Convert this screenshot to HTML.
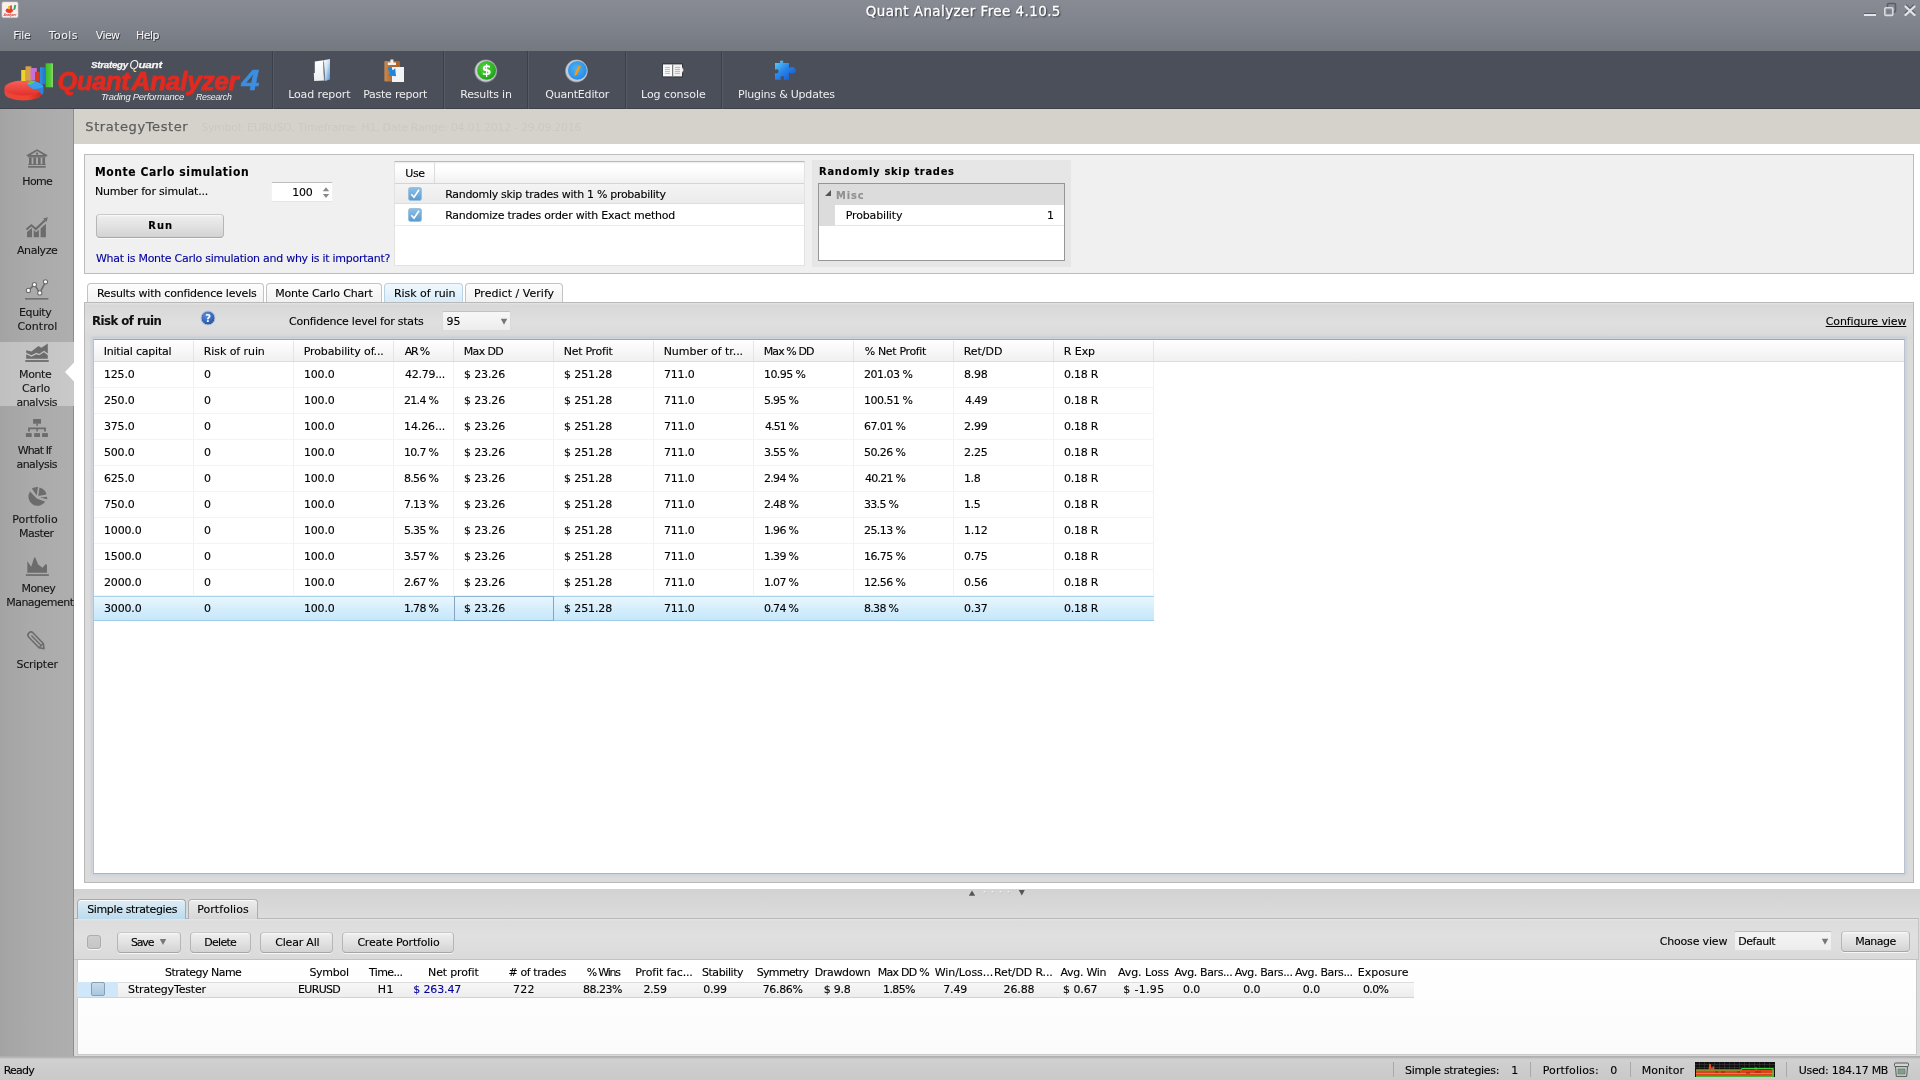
<!DOCTYPE html>
<html lang="en">
<head>
<meta charset="utf-8">
<title>Quant Analyzer Free 4.10.5</title>
<style>
*{box-sizing:border-box;margin:0;padding:0}
html,body{width:1920px;height:1080px;overflow:hidden;background:#fff}
#app{position:absolute;left:0;top:0;width:1920px;height:1080px;overflow:hidden;transform:translateZ(0);will-change:transform}
body{position:relative;font-family:"DejaVu Sans","Liberation Sans",sans-serif;font-size:11px;letter-spacing:-0.25px;color:#000;-webkit-text-stroke:.12px currentColor;line-height:14px}
.a{position:absolute;white-space:nowrap}
.b{font-weight:bold}
.cd{font-family:"DejaVu Sans Condensed","DejaVu Sans","Liberation Sans",sans-serif}
/* top chrome */
#titlebar{left:0;top:0;width:1920px;height:51px;background:linear-gradient(#888b94 0,#80848d 45%,#74787f 100%)}
.title{color:#fff;-webkit-text-stroke:.3px #fff;text-shadow:1px 1px 1.5px rgba(30,30,40,.9)}
.menu{color:#f6f6f6;-webkit-text-stroke:0;text-shadow:1px 1px 0 rgba(30,30,40,.75)}
#toolbar{left:0;top:51px;width:1920px;height:58px;background:#4b4f59;border-bottom:1px solid #3d4048}
.tsep{top:51px;width:2px;height:58px;border-left:1px solid #3b3f47;border-right:1px solid #565a64}
.tlabel{color:#eeeeee;-webkit-text-stroke:0}
/* sidebar */
#sidebar{left:0;top:109px;width:74px;height:949px;background:linear-gradient(90deg,#a3a3a3 0,#aaaaaa 30px,#aeaeae 72px,#aeaeae 72.5px,#8e8e8e 73px,#8e8e8e 74px)}
#sidesel{left:0;top:342px;width:74px;height:64px;background:linear-gradient(90deg,#c0c0c0,#c9c9c9)}
.slabel{color:#161616}
.vsep{width:1px;background:#f2f2f2}
.hsep{height:1px;background:#f3f3f3}
/* header band */
#band{left:74px;top:109px;width:1846px;height:35px;background:#d5d2cb}
/* panels */
#mcpanel{left:84px;top:154px;width:1830px;height:120px;background:#f0f0f0;border:1px solid #bcbcbc}
#rrpanel{left:84px;top:302px;width:1830px;height:581px;background:#dbdbdb;border:1px solid #b9b9b9}
#rrhead{left:85px;top:303px;width:1828px;height:36px;background:linear-gradient(#e4e4e4 0,#d8d8d8 2px,#dfdfdf 55%,#d9d9d9)}
#rrtable{left:93px;top:339px;width:1812px;height:535px;background:#fff;border:1px solid #a9b6c6;border-top-color:#9ca8b6;border-left-color:#b7c2ce;border-right-color:#b7c2ce;box-shadow:0 0 0 1px #ccd5df,0 -1px 2px 1px rgba(186,199,214,.75),0 0 3px 1px rgba(190,202,216,.6)}
.tab{top:283px;height:20px;border:1px solid #c3c3c3;border-bottom:none;border-radius:4px 4px 0 0;background:linear-gradient(#fdfdfd,#f1f1f1);text-align:center;line-height:17px}
.tab.sel{background:linear-gradient(#f1f8fd,#d6ebf9);border-color:#b9d2e4}
.btn{border:1px solid #b6b6b6;border-top-color:#c9c9c9;border-bottom-color:#a6a6a6;border-radius:4px;background:linear-gradient(#fbfbfb 0,#ececec 2px,#e2e2e2 50%,#d3d3d3);text-align:center;box-shadow:0 1px 0 rgba(255,255,255,.75)}
.th{top:340px;height:21px;line-height:21px;padding-left:10px;border-right:1px solid #e3e3e3;background:linear-gradient(#fff,#f1f1f1);overflow:hidden}
.td{height:26px;line-height:25px;padding-left:10px;border-right:1px solid #efefef;border-bottom:1px solid #efefef;overflow:hidden}
.selrow .td{background:linear-gradient(#e4f3fd,#c5e4f8);border-right-color:transparent;border-bottom:1px solid #9fcbe6;border-top:1px solid #a6d0ea;line-height:23px}
#thead{left:94px;top:340px;width:1810px;height:22px;background:linear-gradient(#ffffff,#f0f0f0);border-bottom:1px solid #dcdcdc}
/* bottom */
#bottom{left:74px;top:889px;width:1846px;height:169px;background:linear-gradient(#d2d2d2 0,#dcdcdc 30px,#dadada 100%)}
#btoolbar{left:74px;top:918px;width:1845px;height:42px;background:linear-gradient(#e6e6e6 0,#dcdcdc 2px,#e0e0e0 45%,#dadada);border-top:1px solid #b9b9b9;border-bottom:1px solid #c2c2c2;border-right:1px solid #c4c4c4}
#btable{left:77px;top:960px;width:1840px;height:95px;background:linear-gradient(#fff,#fbfbfb);border:1px solid #c9c9c9;border-top:none}
#status{left:0;top:1056px;width:1920px;height:24px;background:linear-gradient(#b4b4b4 0,#a9a9a9 1px,#c4c4c4 2px,#d1d1d1 4px,#cdcdcd 12px,#c9c9c9 24px)}
.ssep{top:1062px;width:1px;height:15px;background:#a9a9a9}
.bh{top:965px;text-align:center}
.bd{top:982px;text-align:center}
.link{color:#0000a0}
</style>
</head>
<body>
<div id="app">
<div id="titlebar" class="a"></div>
<svg class="a" style="left:1px;top:1px" width="18" height="18" viewBox="0 0 18 18">
<rect x="1" y="1" width="16" height="15.6" rx="1.5" fill="#f6f0ee" stroke="#d8d4d6" stroke-width=".6"/>
<ellipse cx="8.3" cy="9.6" rx="3.6" ry="2.4" fill="#ee3a2c"/>
<rect x="7" y="5" width="2" height="3.2" fill="#f0c030"/>
<rect x="9" y="4.4" width="2" height="3.6" fill="#d05a48"/>
<path d="M12.3 8.8 L13.4 3.8 L15.2 4.2 L14.4 8.2 Q13.2 9.4 11.4 9.2Z" fill="#3aa860"/>
<text x="2.6" y="14.6" font-family="Liberation Sans, sans-serif" font-size="3.4" font-weight="bold" font-style="italic" fill="#d83c34" textLength="12.5" lengthAdjust="spacingAndGlyphs">Analyzer</text>
</svg>
<div class="a title" style="left:865.7px;top:4px;letter-spacing:0.41px;font-size:13.5px;">Quant Analyzer Free 4.10.5</div>
<svg class="a" style="left:1860px;top:0" width="60" height="22" viewBox="1860 0 60 22">
<rect x="1864" y="13" width="12" height="1" fill="#5a5d66"/>
<rect x="1864" y="14" width="12" height="2" fill="#e4e5e8"/>
<rect x="1887.5" y="3.5" width="8" height="8.5" rx="1" fill="none" stroke="#5b5e67" stroke-width="1.6"/>
<rect x="1884.8" y="7.8" width="8" height="7.6" rx="1.2" fill="#878a93" stroke="#d9dadd" stroke-width="1.6"/>
<rect x="1887" y="10" width="3.6" height="3.4" fill="#7a7d85"/>
<path d="M1905.5 6.5 L1914.5 15 M1914.5 6.5 L1905.5 15" stroke="#5d6069" stroke-width="3" fill="none" transform="translate(0,-1.2)"/>
<path d="M1905.5 6.5 L1914.5 15 M1914.5 6.5 L1905.5 15" stroke="#e3e4e7" stroke-width="2.4" fill="none" stroke-linecap="round"/>
</svg>
<div class="a menu" style="left:13.2px;top:29px;letter-spacing:-0.27px;">File</div>
<div class="a menu" style="left:48.7px;top:29px;letter-spacing:0.45px;">Tools</div>
<div class="a menu" style="left:95.7px;top:29px;letter-spacing:-0.57px;">View</div>
<div class="a menu" style="left:135.9px;top:29px;letter-spacing:-0.47px;">Help</div>
<div id="toolbar" class="a"></div>
<div class="a tsep" style="left:272px"></div>
<div class="a tsep" style="left:443px"></div>
<div class="a tsep" style="left:527px"></div>
<div class="a tsep" style="left:625px"></div>
<div class="a tsep" style="left:721px"></div>
<svg class="a" style="left:0;top:51px" width="272" height="58" viewBox="0 51 272 58">
<defs>
<linearGradient id="lgR" x1="0" y1="0" x2="0" y2="1"><stop offset="0" stop-color="#f8605a"/><stop offset="1" stop-color="#e2302a"/></linearGradient>
<linearGradient id="lgRs" x1="0" y1="0" x2="1" y2="0"><stop offset="0" stop-color="#e8463c"/><stop offset=".6" stop-color="#f0442e"/><stop offset="1" stop-color="#c8281e"/></linearGradient>
<linearGradient id="lgG" x1="0" y1="0" x2="1" y2="0"><stop offset="0" stop-color="#3fb82c"/><stop offset=".75" stop-color="#58d23c"/><stop offset="1" stop-color="#9be87c"/></linearGradient>
<linearGradient id="lgB" x1="0" y1="0" x2="1" y2="0"><stop offset="0" stop-color="#2f8fe6"/><stop offset="1" stop-color="#1f74c8"/></linearGradient>
</defs>
<!-- pie base -->
<path d="M4.5 88 v5 a19 7.5 0 0 0 38 0 v-5z" fill="url(#lgRs)"/>
<ellipse cx="23.5" cy="88" rx="19" ry="7.5" fill="url(#lgR)"/>
<!-- blue slice -->
<path d="M26 85 L42 84 L43.5 88 v4 a19 7.5 0 0 1 -1.5 3 L38 90Z" fill="#2a84d8"/>
<path d="M26.5 84.5 L35 81 Q42 83 43.5 87 Q38 89.5 33 89Z" fill="#3aa0ee"/>
<path d="M27 84 L31 80.5 L36 81 L31 84.5Z" fill="#5fd04a"/>
<!-- bars -->
<rect x="21.2" y="70" width="4.6" height="11" fill="#f2d22a"/>
<rect x="25.5" y="66.3" width="5.8" height="14.5" fill="#d9a04a"/>
<rect x="30.6" y="68" width="6.2" height="12.5" fill="#c272d8"/>
<rect x="35" y="71.8" width="4.8" height="9.8" fill="#d8381e"/>
<rect x="40" y="67.3" width="5.6" height="17" fill="url(#lgB)"/>
<rect x="45.6" y="63.3" width="7.3" height="24" fill="url(#lgG)"/>
<!-- text -->
<g font-family="Liberation Sans, DejaVu Sans, sans-serif" font-style="italic">
<text x="91" y="68.3" font-size="9.6" font-weight="bold" fill="#f4f4f4" stroke="#f4f4f4" stroke-width=".25" textLength="37" lengthAdjust="spacingAndGlyphs">Strategy</text>
<text x="129.5" y="69.3" font-size="13" font-weight="normal" fill="#fafafa" textLength="9" lengthAdjust="spacingAndGlyphs">Q</text>
<path d="M133 67.5 l2.2 4.2" stroke="#e09a3a" stroke-width="1" fill="none"/>
<text x="138.5" y="68.3" font-size="9.6" font-weight="bold" fill="#f4f4f4" stroke="#f4f4f4" stroke-width=".25" textLength="23.5" lengthAdjust="spacingAndGlyphs">uant</text>
<text x="57.5" y="90" font-size="25" font-weight="bold" fill="#e12a20" stroke="#e12a20" stroke-width=".9" stroke-linejoin="round" textLength="72" lengthAdjust="spacingAndGlyphs">Quant</text>
<text x="131.5" y="90" font-size="25" font-weight="bold" fill="#e12a20" stroke="#e12a20" stroke-width=".9" stroke-linejoin="round" textLength="107" lengthAdjust="spacingAndGlyphs">Analyzer</text>
<text x="241.5" y="90" font-size="29" font-weight="bold" fill="#3c8ee2" stroke="#3c8ee2" stroke-width=".6" textLength="17.5" lengthAdjust="spacingAndGlyphs">4</text>
<text x="101" y="100" font-size="9.6" fill="#eeeeee" textLength="83" lengthAdjust="spacingAndGlyphs">Trading Performance</text>
<text x="196" y="100" font-size="9.6" fill="#eeeeee" textLength="35.5" lengthAdjust="spacingAndGlyphs">Research</text>
</g>
</svg>
<div class="a tlabel" style="left:288.2px;top:88px;letter-spacing:-0.12px;">Load report</div>
<div class="a tlabel" style="left:363.2px;top:88px;letter-spacing:-0.25px;">Paste report</div>
<div class="a tlabel" style="left:460.2px;top:88px;letter-spacing:-0.16px;">Results in</div>
<div class="a tlabel" style="left:545.2px;top:88px;letter-spacing:-0.20px;">QuantEditor</div>
<div class="a tlabel" style="left:641.0px;top:88px;letter-spacing:-0.05px;">Log console</div>
<div class="a tlabel" style="left:738.0px;top:88px;letter-spacing:-0.22px;">Plugins &amp; Updates</div>
<svg class="a" style="left:300px;top:55px" width="520" height="32" viewBox="300 55 520 32">
<defs>
<linearGradient id="fb" x1="0" y1="0" x2="1" y2="1"><stop offset="0" stop-color="#ffffff"/><stop offset=".45" stop-color="#cfe2f4"/><stop offset="1" stop-color="#4f90cf"/></linearGradient>
<linearGradient id="fw" x1="0" y1="0" x2="0" y2="1"><stop offset="0" stop-color="#ffffff"/><stop offset="1" stop-color="#eceef0"/></linearGradient>
<radialGradient id="gg" cx=".4" cy=".35" r=".75"><stop offset="0" stop-color="#52d23e"/><stop offset=".7" stop-color="#2cae22"/><stop offset="1" stop-color="#128a10"/></radialGradient>
<radialGradient id="bg2" cx=".45" cy=".4" r=".75"><stop offset="0" stop-color="#4cb2f4"/><stop offset=".7" stop-color="#2a92ea"/><stop offset="1" stop-color="#1c7cd8"/></radialGradient>
<linearGradient id="pz" x1="0" y1="0" x2="1" y2="1"><stop offset="0" stop-color="#62d0f4"/><stop offset=".45" stop-color="#2a86ea"/><stop offset="1" stop-color="#1450c8"/></linearGradient>
<linearGradient id="cb" x1="0" y1="0" x2="1" y2="0"><stop offset="0" stop-color="#c98a52"/><stop offset=".5" stop-color="#b06a30"/><stop offset="1" stop-color="#a8642c"/></linearGradient>
</defs>
<!-- folder / load report -->
<path d="M323.6 60.2 L330 59 L330 79.6 L325.2 81 Z" fill="url(#fb)"/>
<path d="M314.8 61.4 L323.4 60.3 L323.8 74 L324.6 80.6 L314.2 81 L313.8 73 L314.8 73 Z" fill="url(#fw)"/>
<path d="M323.6 62 L324.4 80.6" stroke="#6f7f94" stroke-width=".9" fill="none"/>
<!-- paste -->
<rect x="384.4" y="61" width="15.6" height="20.4" rx="1" fill="url(#cb)"/>
<path d="M387.8 65 v-2.6 h2.6 v-3 h3 v3 h2.6 v2.6z" fill="#f4f0ea"/>
<rect x="392" y="67" width="12" height="15" fill="#f2f3f5"/>
<path d="M387.6 68 l2 -1.4 l3.4 3.6 l2.2 -2 l0.8 8 l-8 -0.6 l2.2 -2.2z" fill="#1f86e0"/>
<!-- results in -->
<circle cx="485.8" cy="71" r="11.4" fill="#8d9095"/>
<circle cx="485.8" cy="70.8" r="10.6" fill="#c9ccd0"/>
<circle cx="486.6" cy="70.4" r="9.4" fill="url(#gg)"/>
<text x="486.6" y="75.4" text-anchor="middle" font-family="DejaVu Sans, sans-serif" font-weight="bold" font-size="14" fill="#fff">$</text>
<!-- quanteditor -->
<circle cx="576.4" cy="71" r="11.4" fill="#8a8d92"/>
<circle cx="576.6" cy="70.8" r="10.8" fill="#c4cbd6"/>
<circle cx="577.4" cy="70.4" r="9.4" fill="url(#bg2)"/>
<path d="M578.6 65.6 l2.4 .6 l-4 8.6 l-2.6 1.2 l.2 -2.6z" fill="#f09a1e"/>
<!-- log console -->
<rect x="662.4" y="63.4" width="20.4" height="14" fill="#2c2f36"/>
<rect x="663" y="64.4" width="9.6" height="12" fill="#fafafa"/>
<rect x="672.6" y="64.4" width="9.4" height="12" fill="#f2f2f2"/>
<path d="M672.6 64.4 v12" stroke="#7a7a7a" stroke-width="1.2"/>
<path d="M665 67.4 h5 M665 69.4 h5 M665 71.4 h5 M665 73.4 h5 M675 67.4 h5 M675 69.4 h5 M675 71.4 h5 M675 73.4 h5" stroke="#a9a9a9" stroke-width=".8"/>
<path d="M682 67 l1.6 3 l-1.6 3z" fill="#e8e8e8"/>
<!-- plugins -->
<path d="M775 63 h5.4 q-1.6 -2.2 1.2 -2.4 q2.8 .2 1.2 2.4 h6.2 v5.2 q3 -2 5 -.4 q2.6 1.4 1.6 4 q-1.4 2.6 -4.6 1.4 l-2 -.8 v7.4 h-5 v-3.6 h-3.2 v3.600 h-5.800 v-6.600 q3.400 1.200 3.600 -1.800 q-.2 -3 -3.600 -1.600 z" fill="url(#pz)"/>
</svg>
<div id="sidebar" class="a"></div>
<div id="sidesel" class="a"></div>
<svg class="a" style="left:64px;top:362px" width="10" height="20" viewBox="0 0 10 20"><path d="M10 0.500 L1 10 L10 19.500Z" fill="#fff"/></svg>
<svg class="a" style="left:20px;top:145px" width="34" height="510" viewBox="20 145 34 510" fill="#6c6c6c">
<!-- home -->
<path d="M37 149.300 L47.300 155 L47.300 156.200 L26.700 156.200 L26.700 155 Z M37 151 L30.600 154.900 L43.400 154.900 Z" fill-rule="evenodd"/>
<circle cx="37" cy="153.700" r="1.150"/>
<rect x="28.100" y="156.200" width="17.600" height="1.300"/>
<path d="M29 157.500 h2.600 v6.600 h.8 v1 h-4.200 v-1 h.8z M33.400 157.500 h2.600 v6.600 h.8 v1 h-4.200 v-1 h.8z M38 157.500 h2.600 v6.600 h.8 v1 h-4.200 v-1 h.8z M42.400 157.500 h2.600 v6.600 h.8 v1 h-4.200 v-1 h.8z"/>
<rect x="28.100" y="166" width="17.600" height="1.700"/>
<!-- analyze -->
<path d="M26.400 229.500 L31.400 225.300 L35.900 229.100 L45 220.300" fill="none" stroke="#6c6c6c" stroke-width="2.100"/>
<path d="M43.200 218.500 L47.900 217.300 L46.500 222 Z"/>
<path d="M27 232 L32 228 L32 237.300 L27 237.300Z M33.700 230 L36.100 232.200 L38.900 229.800 L38.900 237.300 L33.700 237.300Z M40.600 228.600 L45.900 223.700 L45.900 237.300 L40.600 237.300Z"/>
<!-- equity control -->
<path d="M28.400 290.400 L34.400 284.600 L39.800 292.900 L45.500 281.800" fill="none" stroke="#6c6c6c" stroke-width="1.500"/>
<g fill="#fff" stroke="#6c6c6c" stroke-width="1.100"><circle cx="28.400" cy="290.400" r="2.100"/><circle cx="34.400" cy="284.600" r="2.100"/><circle cx="39.800" cy="292.900" r="2.100"/><circle cx="45.500" cy="281.800" r="2.100"/></g>
<rect x="25" y="298.100" width="23.400" height="1.500"/>
<!-- monte carlo -->
<path d="M26.200 350.200 L31.400 351.600 L38.400 346 L41.400 347.700 L47.800 343.600 L47.800 353.600 L44 350.800 L39.200 353.900 L36.400 352.800 L31.400 355.300 L26.200 352.800Z"/>
<path d="M26.200 354.200 L31.400 356.800 L36.400 354.200 L39.200 355.300 L44 352.300 L47.800 355.200 L47.800 358.800 L26.200 358.800Z"/>
<rect x="25.300" y="360.100" width="23.400" height="1.800"/>
<!-- what if -->
<rect x="33.100" y="419" width="7.900" height="4.700"/>
<rect x="36.400" y="423.700" width="1.500" height="2.200"/>
<path d="M28.100 427.600 h17.800 v4 h-1.800 v-2.300 h-6.200 v2.300 h-1.500 v-2.300 h-6.500 v2.300 h-1.800z"/>
<rect x="25.900" y="433.100" width="5.800" height="3.900"/><rect x="34.200" y="433.100" width="5.800" height="3.900"/><rect x="42.100" y="433.100" width="5.800" height="3.900"/>
<!-- portfolio pie -->
<path d="M30 491.400 A9 9 0 1 0 45.200 501.800 L36.800 498.600 Z"/>
<path d="M31.800 488.600 A9 9 0 0 1 38 487.100 L36.700 495.500 Z"/>
<path d="M39.500 487.400 A9 9 0 0 1 46.400 494.400 L38.300 496 Z"/>
<path d="M47 496.800 A9 9 0 0 1 47.100 499.300 L40 497.500 Z"/>
<!-- money -->
<path d="M27.300 572.700 L27.300 561.200 L31.200 566.700 L34.200 557.600 L35.300 557.600 L38.100 564.400 L42.600 567.800 L45.400 564.300 L47 564.800 L47 572.700Z"/>
<rect x="25.900" y="574.200" width="22.900" height="1.700"/>
<!-- scripter -->
<g transform="translate(36.700,641) rotate(46)" fill="none" stroke="#6c6c6c" stroke-width="1.600" stroke-linejoin="round">
<path d="M-8.200 -3 H6.400 L10.600 0 L6.400 3 H-8.200 A3 3 0 0 1 -8.200 -3Z"/>
<path d="M-7.600 0 H6 M6.400 -3 V3" stroke-width="1.400"/>
</g>
</svg>
<div class="a slabel" style="left:22.3px;top:175px;letter-spacing:-0.63px;">Home</div>
<div class="a slabel" style="left:17.0px;top:244px;letter-spacing:-0.43px;">Analyze</div>
<div class="a slabel" style="left:19.1px;top:306px;letter-spacing:-0.42px;">Equity</div>
<div class="a slabel" style="left:17.4px;top:320px;letter-spacing:0.02px;">Control</div>
<div class="a slabel" style="left:19.1px;top:368px;letter-spacing:-0.40px;">Monte</div>
<div class="a slabel" style="left:22.0px;top:382px;letter-spacing:-0.10px;">Carlo</div>
<div class="a" style="left:0;top:394px;width:74px;height:12px;overflow:hidden">
<div class="a slabel" style="left:16.4px;top:2px;letter-spacing:-0.49px;">analysis</div>
</div>
<div class="a slabel" style="left:17.7px;top:444px;letter-spacing:-0.88px;">What If</div>
<div class="a slabel" style="left:16.4px;top:458px;letter-spacing:-0.49px;">analysis</div>
<div class="a slabel" style="left:12.3px;top:513px;letter-spacing:0.01px;">Portfolio</div>
<div class="a slabel" style="left:19.1px;top:527px;letter-spacing:-0.54px;">Master</div>
<div class="a slabel" style="left:21.6px;top:582px;letter-spacing:-0.60px;">Money</div>
<div class="a slabel" style="left:6.2px;top:596px;letter-spacing:-0.51px;">Management</div>
<div class="a slabel" style="left:16.4px;top:658px;letter-spacing:-0.23px;">Scripter</div>
<div id="band" class="a"></div>
<div class="a" style="left:85.3px;top:120px;letter-spacing:0.59px;font-size:13px;color:#5e5e5e;-webkit-text-stroke:.25px #5e5e5e;">StrategyTester</div>
<div class="a" style="left:201.2px;top:121px;letter-spacing:-0.29px;color:#ccc9c2;-webkit-text-stroke:0;">Symbol: EURUSD, Timeframe: H1, Date Range: 04.01.2012 - 29.09.2016</div>
<div id="mcpanel" class="a"></div>
<div class="a cd" style="left:94.9px;top:165px;letter-spacing:0.58px;font-size:12px;font-weight:bold;">Monte Carlo simulation</div>
<div class="a" style="left:94.9px;top:185px;letter-spacing:-0.20px;">Number for simulat...</div>
<div class="a " style="left:271px;top:182px;width:62px;height:20px;background:#fff;border:1px solid #f2f2f2;border-top-color:#bcbcbc;border-bottom-color:#e6e6e6;border-radius:2px"></div>
<div class="a" style="left:292.2px;top:186px;letter-spacing:-0.20px;">100</div>
<svg class="a" style="left:321px;top:186px" width="10" height="13" viewBox="0 0 10 13"><path d="M1.800 5.300 L5 1.300 L8.200 5.300Z M1.800 8 L5 12 L8.200 8Z" fill="#8a8a8a"/></svg>
<div class="a btn" style="left:96px;top:214px;width:128px;height:24px;"></div>
<div class="a cd" style="left:148.3px;top:219px;letter-spacing:1.05px;font-weight:bold;">Run</div>
<div class="a link" style="left:95.9px;top:252px;letter-spacing:-0.27px;">What is Monte Carlo simulation and why is it important?</div>
<div class="a " style="left:394px;top:161px;width:411px;height:105px;background:#fff;border:1px solid #e2e2e2;border-top:1px solid #b9b9b9"></div>
<div class="a " style="left:395px;top:162px;width:409px;height:22px;background:linear-gradient(#e9e9e9 0,#ffffff 2px,#fdfdfd 40%,#f1f1f1);border-bottom:1px solid #d4d4d4"></div>
<div class="a " style="left:434px;top:163px;width:1px;height:20px;background:#dcdcdc"></div>
<div class="a" style="left:405.3px;top:167px;letter-spacing:-0.45px;">Use</div>
<div class="a " style="left:395px;top:184px;width:409px;height:20px;background:linear-gradient(#f4f4f4,#ebebeb);border-bottom:1px solid #dedede"></div>
<div class="a " style="left:395px;top:225px;width:409px;height:1px;background:#ececec"></div>
<svg class="a" style="left:408px;top:187px" width="14" height="14" viewBox="0 0 14 14"><defs><linearGradient id="ck187" x1="0" y1="0" x2="0" y2="1"><stop offset="0" stop-color="#8ec0e6"/><stop offset="1" stop-color="#5a9ad0"/></linearGradient></defs><rect x="0.5" y="0.5" width="13" height="13" rx="2" fill="url(#ck187)" stroke="#9cc0de"/><path d="M3.300 7.200 L6 10.200 L11 2.800" fill="none" stroke="#fff" stroke-width="1.700"/></svg>
<svg class="a" style="left:408px;top:208px" width="14" height="14" viewBox="0 0 14 14"><defs><linearGradient id="ck208" x1="0" y1="0" x2="0" y2="1"><stop offset="0" stop-color="#8ec0e6"/><stop offset="1" stop-color="#5a9ad0"/></linearGradient></defs><rect x="0.5" y="0.5" width="13" height="13" rx="2" fill="url(#ck208)" stroke="#9cc0de"/><path d="M3.300 7.200 L6 10.200 L11 2.800" fill="none" stroke="#fff" stroke-width="1.700"/></svg>
<div class="a" style="left:445.2px;top:188px;letter-spacing:-0.30px;">Randomly skip trades with 1 % probability</div>
<div class="a" style="left:445.2px;top:209px;letter-spacing:-0.24px;">Randomize trades order with Exact method</div>
<div class="a " style="left:812px;top:160px;width:259px;height:107px;background:#e6e6e6"></div>
<div class="a cd" style="left:819.1px;top:165px;letter-spacing:0.72px;font-weight:bold;">Randomly skip trades</div>
<div class="a " style="left:818px;top:183px;width:247px;height:78px;background:#fff;border:1px solid #969696"></div>
<div class="a " style="left:819px;top:184px;width:245px;height:21px;background:#dcdcdc"></div>
<div class="a " style="left:819px;top:205px;width:16px;height:21px;background:#dcdcdc"></div>
<div class="a " style="left:835px;top:225px;width:229px;height:1px;background:#e4e4e4"></div>
<svg class="a" style="left:824px;top:189px" width="8" height="8" viewBox="0 0 8 8"><path d="M7 1 L7 7 L1 7Z" fill="#555"/></svg>
<div class="a cd" style="left:836.0px;top:189px;letter-spacing:0.90px;font-weight:bold;color:#909090;">Misc</div>
<div class="a" style="left:845.7px;top:209px;letter-spacing:-0.14px;">Probability</div>
<div class="a" style="left:1047.0px;top:209px;letter-spacing:0px;">1</div>
<div class="a tab" style="left:87px;width:177px"></div>
<div class="a tab" style="left:266px;width:116px"></div>
<div class="a tab sel" style="left:384px;width:79px"></div>
<div class="a tab" style="left:465px;width:98px"></div>
<div class="a" style="left:96.9px;top:287px;letter-spacing:-0.20px;">Results with confidence levels</div>
<div class="a" style="left:275.2px;top:287px;letter-spacing:-0.17px;">Monte Carlo Chart</div>
<div class="a" style="left:393.9px;top:287px;letter-spacing:-0.02px;">Risk of ruin</div>
<div class="a" style="left:473.9px;top:287px;letter-spacing:0.03px;">Predict / Verify</div>
<div id="rrpanel" class="a"></div>
<div id="rrhead" class="a"></div>
<div class="a cd" style="left:92.1px;top:314px;letter-spacing:-0.52px;font-size:13px;font-weight:bold;color:#111;">Risk of ruin</div>
<svg class="a" style="left:200px;top:310px" width="16" height="16" viewBox="0 0 16 16"><defs><radialGradient id="hg" cx=".4" cy=".3" r=".8"><stop offset="0" stop-color="#5b8fdc"/><stop offset="1" stop-color="#1d4a9c"/></radialGradient></defs><circle cx="8" cy="8" r="7" fill="url(#hg)" stroke="#b9c6dc" stroke-width="1"/><text x="8" y="12" text-anchor="middle" font-family="DejaVu Sans, sans-serif" font-weight="bold" font-size="10" fill="#fff">?</text></svg>
<div class="a" style="left:289.0px;top:315px;letter-spacing:-0.23px;">Confidence level for stats</div>
<div class="a " style="left:442px;top:311px;width:69px;height:20px;background:linear-gradient(#f7f7f7,#ededed);border:1px solid #dadada;border-top-color:#c2c2c2;border-radius:2px"></div>
<div class="a" style="left:446.4px;top:315px;letter-spacing:0.10px;">95</div>
<svg class="a" style="left:500px;top:318px" width="8" height="8" viewBox="0 0 8 8"><path d="M0.800 0.800 L7.200 0.800 L4 6.800Z" fill="#777"/></svg>
<div class="a" style="left:1825.7px;top:315px;letter-spacing:-0.11px;text-decoration:underline;text-decoration-skip-ink:none;text-decoration-thickness:1px;text-underline-offset:1px;">Configure view</div>
<div id="rrtable" class="a"></div>
<div id="thead" class="a"></div>
<div class="a vsep" style="left:193px;top:341px;height:20px;background:#e4e4e4"></div>
<div class="a vsep" style="left:193px;top:362px;height:259px"></div>
<div class="a vsep" style="left:293px;top:341px;height:20px;background:#e4e4e4"></div>
<div class="a vsep" style="left:293px;top:362px;height:259px"></div>
<div class="a vsep" style="left:393px;top:341px;height:20px;background:#e4e4e4"></div>
<div class="a vsep" style="left:393px;top:362px;height:259px"></div>
<div class="a vsep" style="left:453px;top:341px;height:20px;background:#e4e4e4"></div>
<div class="a vsep" style="left:453px;top:362px;height:259px"></div>
<div class="a vsep" style="left:553px;top:341px;height:20px;background:#e4e4e4"></div>
<div class="a vsep" style="left:553px;top:362px;height:259px"></div>
<div class="a vsep" style="left:653px;top:341px;height:20px;background:#e4e4e4"></div>
<div class="a vsep" style="left:653px;top:362px;height:259px"></div>
<div class="a vsep" style="left:753px;top:341px;height:20px;background:#e4e4e4"></div>
<div class="a vsep" style="left:753px;top:362px;height:259px"></div>
<div class="a vsep" style="left:853px;top:341px;height:20px;background:#e4e4e4"></div>
<div class="a vsep" style="left:853px;top:362px;height:259px"></div>
<div class="a vsep" style="left:953px;top:341px;height:20px;background:#e4e4e4"></div>
<div class="a vsep" style="left:953px;top:362px;height:259px"></div>
<div class="a vsep" style="left:1053px;top:341px;height:20px;background:#e4e4e4"></div>
<div class="a vsep" style="left:1053px;top:362px;height:259px"></div>
<div class="a vsep" style="left:1153px;top:341px;height:20px;background:#e4e4e4"></div>
<div class="a vsep" style="left:1153px;top:362px;height:259px"></div>
<div class="a hsep" style="left:94px;top:387px;width:1060px"></div>
<div class="a hsep" style="left:94px;top:413px;width:1060px"></div>
<div class="a hsep" style="left:94px;top:439px;width:1060px"></div>
<div class="a hsep" style="left:94px;top:465px;width:1060px"></div>
<div class="a hsep" style="left:94px;top:491px;width:1060px"></div>
<div class="a hsep" style="left:94px;top:517px;width:1060px"></div>
<div class="a hsep" style="left:94px;top:543px;width:1060px"></div>
<div class="a hsep" style="left:94px;top:569px;width:1060px"></div>
<div class="a hsep" style="left:94px;top:595px;width:1060px"></div>
<div class="a " style="left:94px;top:596px;width:1060px;height:25px;background:linear-gradient(#e8f6fe,#d6eefc 50%,#c5e7fb);border-top:1px solid #a6d2ec;border-bottom:1px solid #9fcdea"></div>
<div class="a " style="left:454px;top:596px;width:100px;height:25px;border:1px solid #86a4c2;border-top-color:#8fb4d4;border-bottom-color:#8fb4d4"></div>
<div class="a" style="left:103.7px;top:345px;letter-spacing:-0.21px;">Initial capital</div>
<div class="a" style="left:203.7px;top:345px;letter-spacing:-0.07px;">Risk of ruin</div>
<div class="a" style="left:303.7px;top:345px;letter-spacing:-0.11px;">Probability of...</div>
<div class="a" style="left:404.7px;top:345px;letter-spacing:-1.20px;">AR %</div>
<div class="a" style="left:463.7px;top:345px;letter-spacing:-0.62px;">Max DD</div>
<div class="a" style="left:563.7px;top:345px;letter-spacing:-0.27px;">Net Profit</div>
<div class="a" style="left:663.7px;top:345px;letter-spacing:-0.05px;">Number of tr...</div>
<div class="a" style="left:763.7px;top:345px;letter-spacing:-0.89px;">Max % DD</div>
<div class="a" style="left:864.7px;top:345px;letter-spacing:-0.34px;">% Net Profit</div>
<div class="a" style="left:963.7px;top:345px;letter-spacing:-0.04px;">Ret/DD</div>
<div class="a" style="left:1063.7px;top:345px;letter-spacing:-0.05px;">R Exp</div>
<div class="a" style="left:104.0px;top:368px;letter-spacing:-0.20px;">125.0</div>
<div class="a" style="left:204.0px;top:368px;letter-spacing:-0.00px;">0</div>
<div class="a" style="left:304.0px;top:368px;letter-spacing:-0.20px;">100.0</div>
<div class="a" style="left:405.0px;top:368px;letter-spacing:-0.24px;">42.79...</div>
<div class="a" style="left:464.0px;top:368px;letter-spacing:-0.13px;">$ 23.26</div>
<div class="a" style="left:564.0px;top:368px;letter-spacing:-0.11px;">$ 251.28</div>
<div class="a" style="left:664.0px;top:368px;letter-spacing:-0.20px;">711.0</div>
<div class="a" style="left:764.0px;top:368px;letter-spacing:-0.58px;">10.95 %</div>
<div class="a" style="left:864.0px;top:368px;letter-spacing:-0.50px;">201.03 %</div>
<div class="a" style="left:964.0px;top:368px;letter-spacing:-0.27px;">8.98</div>
<div class="a" style="left:1064.0px;top:368px;letter-spacing:-0.26px;">0.18 R</div>
<div class="a" style="left:104.0px;top:394px;letter-spacing:-0.20px;">250.0</div>
<div class="a" style="left:204.0px;top:394px;letter-spacing:-0.00px;">0</div>
<div class="a" style="left:304.0px;top:394px;letter-spacing:-0.20px;">100.0</div>
<div class="a" style="left:404.0px;top:394px;letter-spacing:-0.70px;">21.4 %</div>
<div class="a" style="left:464.0px;top:394px;letter-spacing:-0.13px;">$ 23.26</div>
<div class="a" style="left:564.0px;top:394px;letter-spacing:-0.11px;">$ 251.28</div>
<div class="a" style="left:664.0px;top:394px;letter-spacing:-0.20px;">711.0</div>
<div class="a" style="left:764.0px;top:394px;letter-spacing:-0.70px;">5.95 %</div>
<div class="a" style="left:864.0px;top:394px;letter-spacing:-0.50px;">100.51 %</div>
<div class="a" style="left:965.0px;top:394px;letter-spacing:-0.60px;">4.49</div>
<div class="a" style="left:1064.0px;top:394px;letter-spacing:-0.26px;">0.18 R</div>
<div class="a" style="left:104.0px;top:420px;letter-spacing:-0.20px;">375.0</div>
<div class="a" style="left:204.0px;top:420px;letter-spacing:-0.00px;">0</div>
<div class="a" style="left:304.0px;top:420px;letter-spacing:-0.20px;">100.0</div>
<div class="a" style="left:404.0px;top:420px;letter-spacing:-0.10px;">14.26...</div>
<div class="a" style="left:464.0px;top:420px;letter-spacing:-0.13px;">$ 23.26</div>
<div class="a" style="left:564.0px;top:420px;letter-spacing:-0.11px;">$ 251.28</div>
<div class="a" style="left:664.0px;top:420px;letter-spacing:-0.20px;">711.0</div>
<div class="a" style="left:765.0px;top:420px;letter-spacing:-0.90px;">4.51 %</div>
<div class="a" style="left:864.0px;top:420px;letter-spacing:-0.58px;">67.01 %</div>
<div class="a" style="left:964.0px;top:420px;letter-spacing:-0.27px;">2.99</div>
<div class="a" style="left:1064.0px;top:420px;letter-spacing:-0.26px;">0.18 R</div>
<div class="a" style="left:104.0px;top:446px;letter-spacing:-0.20px;">500.0</div>
<div class="a" style="left:204.0px;top:446px;letter-spacing:-0.00px;">0</div>
<div class="a" style="left:304.0px;top:446px;letter-spacing:-0.20px;">100.0</div>
<div class="a" style="left:404.0px;top:446px;letter-spacing:-0.70px;">10.7 %</div>
<div class="a" style="left:464.0px;top:446px;letter-spacing:-0.13px;">$ 23.26</div>
<div class="a" style="left:564.0px;top:446px;letter-spacing:-0.11px;">$ 251.28</div>
<div class="a" style="left:664.0px;top:446px;letter-spacing:-0.20px;">711.0</div>
<div class="a" style="left:764.0px;top:446px;letter-spacing:-0.70px;">3.55 %</div>
<div class="a" style="left:864.0px;top:446px;letter-spacing:-0.58px;">50.26 %</div>
<div class="a" style="left:964.0px;top:446px;letter-spacing:-0.27px;">2.25</div>
<div class="a" style="left:1064.0px;top:446px;letter-spacing:-0.26px;">0.18 R</div>
<div class="a" style="left:104.0px;top:472px;letter-spacing:-0.20px;">625.0</div>
<div class="a" style="left:204.0px;top:472px;letter-spacing:-0.00px;">0</div>
<div class="a" style="left:304.0px;top:472px;letter-spacing:-0.20px;">100.0</div>
<div class="a" style="left:404.0px;top:472px;letter-spacing:-0.70px;">8.56 %</div>
<div class="a" style="left:464.0px;top:472px;letter-spacing:-0.13px;">$ 23.26</div>
<div class="a" style="left:564.0px;top:472px;letter-spacing:-0.11px;">$ 251.28</div>
<div class="a" style="left:664.0px;top:472px;letter-spacing:-0.20px;">711.0</div>
<div class="a" style="left:764.0px;top:472px;letter-spacing:-0.70px;">2.94 %</div>
<div class="a" style="left:865.0px;top:472px;letter-spacing:-0.75px;">40.21 %</div>
<div class="a" style="left:964.0px;top:472px;letter-spacing:-0.40px;">1.8</div>
<div class="a" style="left:1064.0px;top:472px;letter-spacing:-0.26px;">0.18 R</div>
<div class="a" style="left:104.0px;top:498px;letter-spacing:-0.20px;">750.0</div>
<div class="a" style="left:204.0px;top:498px;letter-spacing:-0.00px;">0</div>
<div class="a" style="left:304.0px;top:498px;letter-spacing:-0.20px;">100.0</div>
<div class="a" style="left:404.0px;top:498px;letter-spacing:-0.70px;">7.13 %</div>
<div class="a" style="left:464.0px;top:498px;letter-spacing:-0.13px;">$ 23.26</div>
<div class="a" style="left:564.0px;top:498px;letter-spacing:-0.11px;">$ 251.28</div>
<div class="a" style="left:664.0px;top:498px;letter-spacing:-0.20px;">711.0</div>
<div class="a" style="left:764.0px;top:498px;letter-spacing:-0.70px;">2.48 %</div>
<div class="a" style="left:864.0px;top:498px;letter-spacing:-0.70px;">33.5 %</div>
<div class="a" style="left:964.0px;top:498px;letter-spacing:-0.40px;">1.5</div>
<div class="a" style="left:1064.0px;top:498px;letter-spacing:-0.26px;">0.18 R</div>
<div class="a" style="left:104.0px;top:524px;letter-spacing:-0.16px;">1000.0</div>
<div class="a" style="left:204.0px;top:524px;letter-spacing:-0.00px;">0</div>
<div class="a" style="left:304.0px;top:524px;letter-spacing:-0.20px;">100.0</div>
<div class="a" style="left:404.0px;top:524px;letter-spacing:-0.70px;">5.35 %</div>
<div class="a" style="left:464.0px;top:524px;letter-spacing:-0.13px;">$ 23.26</div>
<div class="a" style="left:564.0px;top:524px;letter-spacing:-0.11px;">$ 251.28</div>
<div class="a" style="left:664.0px;top:524px;letter-spacing:-0.20px;">711.0</div>
<div class="a" style="left:764.0px;top:524px;letter-spacing:-0.70px;">1.96 %</div>
<div class="a" style="left:864.0px;top:524px;letter-spacing:-0.58px;">25.13 %</div>
<div class="a" style="left:964.0px;top:524px;letter-spacing:-0.27px;">1.12</div>
<div class="a" style="left:1064.0px;top:524px;letter-spacing:-0.26px;">0.18 R</div>
<div class="a" style="left:104.0px;top:550px;letter-spacing:-0.16px;">1500.0</div>
<div class="a" style="left:204.0px;top:550px;letter-spacing:-0.00px;">0</div>
<div class="a" style="left:304.0px;top:550px;letter-spacing:-0.20px;">100.0</div>
<div class="a" style="left:404.0px;top:550px;letter-spacing:-0.70px;">3.57 %</div>
<div class="a" style="left:464.0px;top:550px;letter-spacing:-0.13px;">$ 23.26</div>
<div class="a" style="left:564.0px;top:550px;letter-spacing:-0.11px;">$ 251.28</div>
<div class="a" style="left:664.0px;top:550px;letter-spacing:-0.20px;">711.0</div>
<div class="a" style="left:764.0px;top:550px;letter-spacing:-0.70px;">1.39 %</div>
<div class="a" style="left:864.0px;top:550px;letter-spacing:-0.58px;">16.75 %</div>
<div class="a" style="left:964.0px;top:550px;letter-spacing:-0.27px;">0.75</div>
<div class="a" style="left:1064.0px;top:550px;letter-spacing:-0.26px;">0.18 R</div>
<div class="a" style="left:104.0px;top:576px;letter-spacing:-0.16px;">2000.0</div>
<div class="a" style="left:204.0px;top:576px;letter-spacing:-0.00px;">0</div>
<div class="a" style="left:304.0px;top:576px;letter-spacing:-0.20px;">100.0</div>
<div class="a" style="left:404.0px;top:576px;letter-spacing:-0.70px;">2.67 %</div>
<div class="a" style="left:464.0px;top:576px;letter-spacing:-0.13px;">$ 23.26</div>
<div class="a" style="left:564.0px;top:576px;letter-spacing:-0.11px;">$ 251.28</div>
<div class="a" style="left:664.0px;top:576px;letter-spacing:-0.20px;">711.0</div>
<div class="a" style="left:764.0px;top:576px;letter-spacing:-0.70px;">1.07 %</div>
<div class="a" style="left:864.0px;top:576px;letter-spacing:-0.58px;">12.56 %</div>
<div class="a" style="left:964.0px;top:576px;letter-spacing:-0.27px;">0.56</div>
<div class="a" style="left:1064.0px;top:576px;letter-spacing:-0.26px;">0.18 R</div>
<div class="a" style="left:104.0px;top:602px;letter-spacing:-0.16px;">3000.0</div>
<div class="a" style="left:204.0px;top:602px;letter-spacing:-0.00px;">0</div>
<div class="a" style="left:304.0px;top:602px;letter-spacing:-0.20px;">100.0</div>
<div class="a" style="left:404.0px;top:602px;letter-spacing:-0.70px;">1.78 %</div>
<div class="a" style="left:464.0px;top:602px;letter-spacing:-0.13px;">$ 23.26</div>
<div class="a" style="left:564.0px;top:602px;letter-spacing:-0.11px;">$ 251.28</div>
<div class="a" style="left:664.0px;top:602px;letter-spacing:-0.20px;">711.0</div>
<div class="a" style="left:764.0px;top:602px;letter-spacing:-0.70px;">0.74 %</div>
<div class="a" style="left:864.0px;top:602px;letter-spacing:-0.70px;">8.38 %</div>
<div class="a" style="left:964.0px;top:602px;letter-spacing:-0.27px;">0.37</div>
<div class="a" style="left:1064.0px;top:602px;letter-spacing:-0.26px;">0.18 R</div>
<div id="bottom" class="a"></div>
<svg class="a" style="left:966px;top:888px" width="62" height="9" viewBox="0 0 62 9"><path d="M2.800 7.800 L6 2.400 L9.200 7.800Z M52.800 2 L58.800 2 L55.800 7.600Z" fill="#555"/><g fill="#f4f4f4"><circle cx="18.500" cy="3.800" r=".9"/><circle cx="26.500" cy="3.800" r=".9"/><circle cx="34.500" cy="3.800" r=".9"/><circle cx="42.500" cy="3.800" r=".9"/></g><g fill="#bdbdbd"><circle cx="19.300" cy="4.700" r=".7"/><circle cx="27.300" cy="4.700" r=".7"/><circle cx="35.300" cy="4.700" r=".7"/><circle cx="43.300" cy="4.700" r=".7"/></g></svg>
<div id="btoolbar" class="a"></div>
<div class="a tab btab sel" style="left:77px;width:109px;top:899px;height:20px;background:linear-gradient(#dfecf4,#bbdbee);border-color:#a2abb3;box-shadow:inset 0 1px 0 rgba(255,255,255,.85);"></div>
<div class="a tab btab" style="left:188px;width:70px;top:899px;height:20px;background:linear-gradient(#ececec,#d6d6d6);border-color:#adadad;box-shadow:inset 0 1px 0 rgba(255,255,255,.8);"></div>
<div class="a" style="left:87.2px;top:903px;letter-spacing:-0.36px;">Simple strategies</div>
<div class="a" style="left:197.2px;top:903px;letter-spacing:0.06px;">Portfolios</div>
<div class="a " style="left:87px;top:935px;width:14px;height:14px;background:linear-gradient(#cecece,#c5c5c5);border:1px solid #adadad;border-radius:3px;box-shadow:0 1px 0 rgba(255,255,255,.7)"></div>
<div class="a btn" style="left:117px;top:932px;width:64px;height:21px;"></div>
<div class="a btn" style="left:190px;top:932px;width:61px;height:21px;"></div>
<div class="a btn" style="left:260px;top:932px;width:73px;height:21px;"></div>
<div class="a btn" style="left:342px;top:932px;width:112px;height:21px;"></div>
<div class="a btn" style="left:1841px;top:931px;width:69px;height:21px;"></div>
<div class="a" style="left:130.9px;top:936px;letter-spacing:-1.15px;">Save</div>
<div class="a" style="left:204.2px;top:936px;letter-spacing:-0.69px;">Delete</div>
<div class="a" style="left:275.2px;top:936px;letter-spacing:-0.18px;">Clear All</div>
<div class="a" style="left:357.4px;top:936px;letter-spacing:-0.20px;">Create Portfolio</div>
<div class="a" style="left:1855.2px;top:935px;letter-spacing:-0.54px;">Manage</div>
<div class="a" style="left:1659.7px;top:935px;letter-spacing:-0.17px;">Choose view</div>
<svg class="a" style="left:159px;top:938px" width="8" height="8" viewBox="0 0 8 8"><path d="M0.800 1 L7.200 1 L4 7Z" fill="#777"/></svg>
<div class="a " style="left:1734px;top:931px;width:98px;height:20px;background:linear-gradient(#f4f4f4,#ededed);border:1px solid #dedede;border-top-color:#bebebe;border-radius:2px"></div>
<div class="a" style="left:1738.2px;top:935px;letter-spacing:-0.45px;">Default</div>
<svg class="a" style="left:1821px;top:938px" width="8" height="8" viewBox="0 0 8 8"><path d="M0.800 0.800 L7.200 0.800 L4 6.800Z" fill="#777"/></svg>
<div id="btable" class="a"></div>
<div class="a " style="left:77px;top:982px;width:1337px;height:16px;background:linear-gradient(#f7f7f7,#ededed);border-top:1px solid #dcdcdc;border-bottom:1px solid #d2d2d2"></div>
<div class="a " style="left:77px;top:982px;width:41px;height:16px;background:#cfe7f9;border-bottom:1px solid #bcd8ec"></div>
<div class="a " style="left:91px;top:982px;width:14px;height:14px;background:linear-gradient(#c6dbeb,#a9c7df);border:1px solid #8c9dab;border-radius:2px"></div>
<div class="a" style="left:165.0px;top:966px;letter-spacing:-0.52px;">Strategy Name</div>
<div class="a" style="left:309.4px;top:966px;letter-spacing:-0.28px;">Symbol</div>
<div class="a" style="left:368.9px;top:966px;letter-spacing:-0.57px;">Time...</div>
<div class="a" style="left:428.1px;top:966px;letter-spacing:-0.16px;">Net profit</div>
<div class="a" style="left:508.5px;top:966px;letter-spacing:-0.40px;"># of trades</div>
<div class="a" style="left:586.7px;top:966px;letter-spacing:-1.20px;">% Wins</div>
<div class="a" style="left:635.3px;top:966px;letter-spacing:-0.15px;">Profit fac...</div>
<div class="a" style="left:701.9px;top:966px;letter-spacing:-0.41px;">Stability</div>
<div class="a" style="left:756.7px;top:966px;letter-spacing:-0.67px;">Symmetry</div>
<div class="a" style="left:814.7px;top:966px;letter-spacing:-0.34px;">Drawdown</div>
<div class="a" style="left:877.7px;top:966px;letter-spacing:-0.74px;">Max DD %</div>
<div class="a" style="left:934.7px;top:966px;letter-spacing:-0.05px;">Win/Loss...</div>
<div class="a" style="left:994.0px;top:966px;letter-spacing:-0.13px;">Ret/DD R...</div>
<div class="a" style="left:1060.5px;top:966px;letter-spacing:-0.29px;">Avg. Win</div>
<div class="a" style="left:1117.9px;top:966px;letter-spacing:-0.05px;">Avg. Loss</div>
<div class="a" style="left:1174.6px;top:966px;letter-spacing:-0.39px;">Avg. Bars...</div>
<div class="a" style="left:1234.7px;top:966px;letter-spacing:-0.38px;">Avg. Bars...</div>
<div class="a" style="left:1295.0px;top:966px;letter-spacing:-0.39px;">Avg. Bars...</div>
<div class="a" style="left:1357.7px;top:966px;letter-spacing:0.00px;">Exposure</div>
<div class="a" style="left:128.1px;top:983px;letter-spacing:-0.16px;">StrategyTester</div>
<div class="a" style="left:298.1px;top:983px;letter-spacing:-0.70px;">EURUSD</div>
<div class="a" style="left:377.8px;top:983px;letter-spacing:0.50px;">H1</div>
<div class="a link" style="left:413.2px;top:983px;letter-spacing:-0.13px;">$ 263.47</div>
<div class="a" style="left:513.1px;top:983px;letter-spacing:0.25px;">722</div>
<div class="a" style="left:582.9px;top:983px;letter-spacing:-0.50px;">88.23%</div>
<div class="a" style="left:643.4px;top:983px;letter-spacing:-0.33px;">2.59</div>
<div class="a" style="left:703.3px;top:983px;letter-spacing:-0.23px;">0.99</div>
<div class="a" style="left:762.7px;top:983px;letter-spacing:-0.34px;">76.86%</div>
<div class="a" style="left:823.7px;top:983px;letter-spacing:-0.23px;">$ 9.8</div>
<div class="a" style="left:883.1px;top:983px;letter-spacing:-0.62px;">1.85%</div>
<div class="a" style="left:943.3px;top:983px;letter-spacing:-0.20px;">7.49</div>
<div class="a" style="left:1003.6px;top:983px;letter-spacing:-0.15px;">26.88</div>
<div class="a" style="left:1063.1px;top:983px;letter-spacing:-0.10px;">$ 0.67</div>
<div class="a" style="left:1123.3px;top:983px;letter-spacing:0.32px;">$ -1.95</div>
<div class="a" style="left:1183.1px;top:983px;letter-spacing:-0.20px;">0.0</div>
<div class="a" style="left:1243.3px;top:983px;letter-spacing:-0.15px;">0.0</div>
<div class="a" style="left:1302.7px;top:983px;letter-spacing:0.05px;">0.0</div>
<div class="a" style="left:1363.0px;top:983px;letter-spacing:-0.67px;">0.0%</div>
<div id="status" class="a"></div>
<div class="a" style="left:3.7px;top:1064px;letter-spacing:-0.80px;">Ready</div>
<div class="a ssep" style="left:1393px"></div>
<div class="a ssep" style="left:1530px"></div>
<div class="a ssep" style="left:1630px"></div>
<div class="a ssep" style="left:1786px"></div>
<div class="a" style="left:1405.0px;top:1064px;letter-spacing:-0.31px;">Simple strategies:</div>
<div class="a" style="left:1511.3px;top:1064px;letter-spacing:-0.30px;">1</div>
<div class="a" style="left:1542.7px;top:1064px;letter-spacing:0.13px;">Portfolios:</div>
<div class="a" style="left:1610.3px;top:1064px;letter-spacing:0.50px;">0</div>
<div class="a" style="left:1641.7px;top:1064px;letter-spacing:0.10px;">Monitor</div>
<div class="a" style="left:1798.7px;top:1064px;letter-spacing:-0.29px;">Used: 184.17 MB</div>
<svg class="a" style="left:1695px;top:1062px" width="80" height="15" viewBox="0 0 80 15">
<rect x="0" y="0" width="80" height="15" fill="#101010"/>
<path d="M0 2.500h80 M0 5.500h80 M4.500 0v7 M9.500 0v7 M14.500 0v7 M19.500 0v7 M24.500 0v7 M29.500 0v7 M34.500 0v7 M39.500 0v7 M44.500 0v7 M49.500 0v7 M54.500 0v7 M59.500 0v7 M64.500 0v7 M69.500 0v7 M74.500 0v7" stroke="#3a3a3a" stroke-width=".6"/>
<rect x="1" y="7.500" width="78" height="7" fill="#d8441c"/>
<path d="M14 7.500 L15 2 L16.500 7.500 M17.500 7.500 L18.200 4.500 L19 7.500 M60 7.500 L61 5.500 L62 7.500" fill="#d8441c" stroke="#e85a28" stroke-width="1"/>
<path d="M1 8 H46 L47 6.500 H78 V14" fill="none" stroke="#46d23a" stroke-width="1.200"/>
<path d="M1 11.500 H79" stroke="#46d23a" stroke-width="1"/>
<path d="M1 14.300 H79" stroke="#46d23a" stroke-width="1"/>
<path d="M20 10 h3 m3 0 h4 m12 0 h3 m6 1 h4 m5 -1 h6" stroke="#902010" stroke-width="1"/>
</svg>
<svg class="a" style="left:1893px;top:1062px" width="17" height="16" viewBox="0 0 17 16">
<rect x="1.500" y="1" width="14" height="3.600" rx="1" fill="#d5d5d5" stroke="#585858" stroke-width="1"/>
<path d="M2.500 4.600 h12 l-.8 9.800 h-10.400z" fill="#c9d0cc" stroke="#585858" stroke-width="1"/>
<rect x="5" y="7" width="7" height="5" fill="#7fa08a" stroke="#5b6b60" stroke-width=".6"/>
</svg>
</div>
</body>
</html>
